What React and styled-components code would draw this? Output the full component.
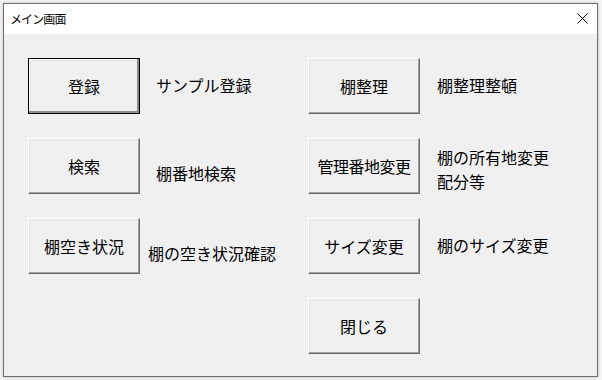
import React from "react";
import styled, { createGlobalStyle } from "styled-components";

const Global = createGlobalStyle`
  html, body { margin: 0; padding: 0; background: #f4f4f4; }
  body { font-family: "Noto Sans CJK JP", "Noto Sans", sans-serif; }
`;

const Page = styled.div`
  width: 602px;
  height: 380px;
  padding: 3px;
  box-sizing: border-box;
`;

const Window = styled.div`
  width: 595px;
  height: 374px;
  box-sizing: border-box;
  border: 1px solid #6e6e6e;
  background: #f0f0f0;
  box-shadow: 0 0 3px rgba(0, 0, 0, 0.22);
  display: flex;
  flex-direction: column;
`;

const TitleBar = styled.div`
  height: 30px;
  flex: none;
  background: #ffffff;
  display: flex;
  align-items: center;
  justify-content: space-between;
  padding: 0 9px 0 6px;
`;

const Title = styled.span`
  font-size: 12px;
  letter-spacing: -0.9px;
  color: #000;
  line-height: 1;
  margin-top: -1px;
`;

const CloseButton = styled.div`
  width: 12px;
  height: 12px;
  display: flex;
  align-items: center;
  justify-content: center;
  margin-top: -2px;
`;

const Body = styled.div`
  flex: 1;
  display: grid;
  grid-template-columns: 112px 168px 112px 1fr;
  grid-auto-rows: 56px;
  row-gap: 24px;
  padding: 24px 0 0 24px;
  align-content: start;
`;

const Button = styled.button`
  width: 112px;
  height: 56px;
  box-sizing: border-box;
  margin: 0;
  padding: 0;
  background: #f0f0f0;
  font-family: "Noto Sans CJK JP", "Noto Sans", sans-serif;
  font-size: 16px;
  color: #000;
  line-height: 1;
  cursor: default;
  border: 1px solid;
  border-color: ${(p) => (p.$focused ? "#000 #000 #000 #000" : "#ffffff #6a6a6a #6a6a6a #ffffff")};
  box-shadow: ${(p) =>
    p.$focused
      ? "inset -2px -2px 0 #8a8a8a, inset 1px 1px 0 #ffffff, inset 2px 2px 0 #e3e3e3"
      : "inset -1px -1px 0 #a0a0a0, inset 1px 1px 0 #e3e3e3"};
  grid-column: ${(p) => p.$col};
  grid-row: ${(p) => p.$row};
  letter-spacing: ${(p) => (p.$tight ? "-0.5px" : "0")};
`;

const Label = styled.div`
  grid-column: ${(p) => p.$col};
  grid-row: ${(p) => p.$row};
  align-self: start;
  padding-top: ${(p) => p.$top}px;
  padding-left: ${(p) => p.$left}px;
  font-size: 16px;
  line-height: 24px;
  color: #000;
  white-space: nowrap;
`;

const items = [
  { label: "登録", desc: ["サンプル登録"], col: 1, row: 1, top: 15, left: 16, focused: true },
  { label: "検索", desc: ["棚番地検索"], col: 1, row: 2, top: 23, left: 16 },
  { label: "棚空き状況", desc: ["棚の空き状況確認"], col: 1, row: 3, top: 23, left: 8 },
  { label: "棚整理", desc: ["棚整理整頓"], col: 3, row: 1, top: 15, left: 17 },
  { label: "管理番地変更", desc: ["棚の所有地変更", "配分等"], col: 3, row: 2, top: 7, left: 17, tight: true },
  { label: "サイズ変更", desc: ["棚のサイズ変更"], col: 3, row: 3, top: 15, left: 17 },
  { label: "閉じる", desc: null, col: 3, row: 4 },
];

export default function App() {
  return (
    <>
      <Global />
      <Page>
        <Window>
          <TitleBar>
            <Title>メイン画面</Title>
            <CloseButton>
              <svg width="11" height="11" viewBox="0 0 11 11">
                <path d="M0.5 0.5 L10.5 10.5 M10.5 0.5 L0.5 10.5" stroke="#000" strokeWidth="1" fill="none" />
              </svg>
            </CloseButton>
          </TitleBar>
          <Body>
            {items.map((it) => (
              <React.Fragment key={it.label}>
                <Button $col={it.col} $row={it.row} $focused={it.focused} $tight={it.tight}>
                  {it.label}
                </Button>
                {it.desc && (
                  <Label $col={it.col + 1} $row={it.row} $top={it.top} $left={it.left}>
                    {it.desc.map((d) => (
                      <div key={d}>{d}</div>
                    ))}
                  </Label>
                )}
              </React.Fragment>
            ))}
          </Body>
        </Window>
      </Page>
    </>
  );
}
